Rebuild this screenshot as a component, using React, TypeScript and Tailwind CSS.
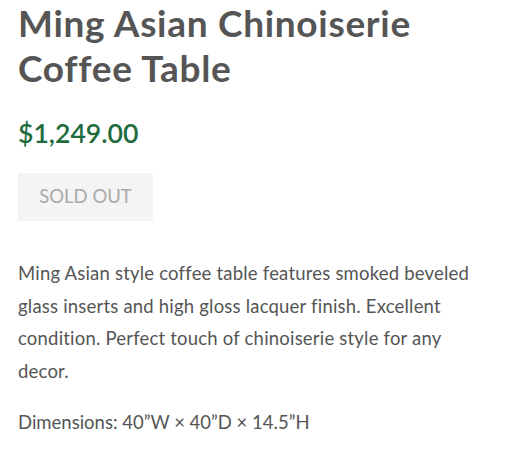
export default function App() {
    return (
        <div className="w-[514px] h-[450px] overflow-hidden bg-white px-[18px] text-[#555555]" style={{ fontFamily: 'Lato, "Open Sans", sans-serif' }}>
            {/* Title */}
            <h1 className="text-[37px] leading-[45px] font-bold tracking-[0.7px] text-[#555555]">
                Ming Asian Chinoiserie Coffee Table
            </h1>

            {/* Price */}
            <p className="mt-[25px] text-[26.6px] leading-[36px] font-semibold text-[#1e6b3c]">$1,249.00</p>

            {/* Sold out button */}
            <button
                type="button"
                disabled
                className="mt-[22px] flex h-[48px] w-[135px] items-center justify-center bg-[#f4f4f4] text-[18.5px] text-[#a9a9a9]"
            >
                SOLD OUT
            </button>

            {/* Description */}
            <p className="mt-[36px] text-[18.5px] leading-[32.5px] tracking-[0.2px]">
                Ming Asian style coffee table features smoked beveled glass inserts and high gloss lacquer finish. Excellent condition. Perfect touch of chinoiserie style for any decor.
            </p>
            <p className="mt-[19px] text-[18.5px] leading-[32.5px]">Dimensions: 40”W × 40”D × 14.5”H</p>
        </div>
    );
}
